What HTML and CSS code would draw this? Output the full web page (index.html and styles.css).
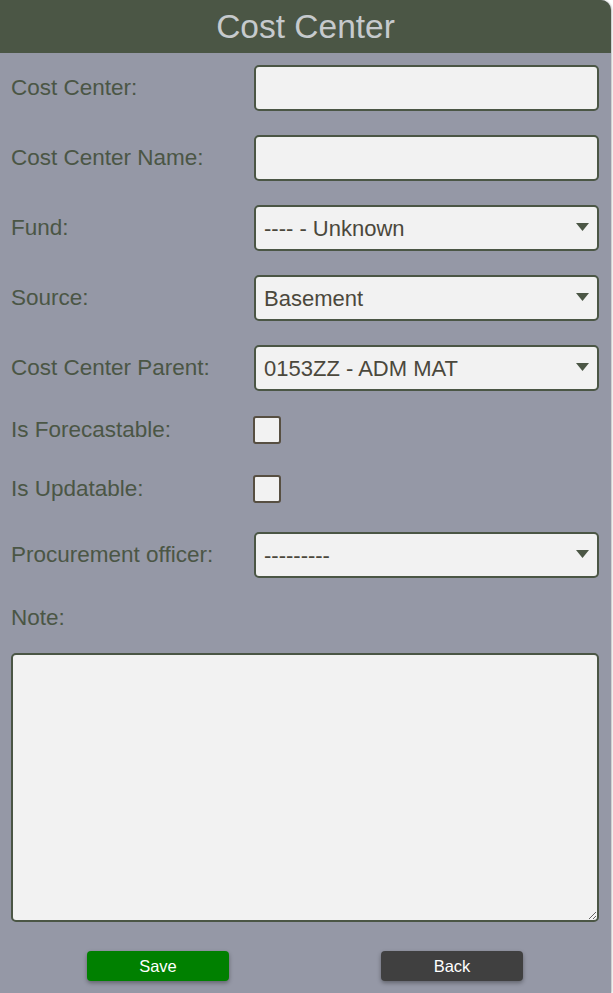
FILE: index.html
```html
<!DOCTYPE html>
<html lang="en">
<head>
<meta charset="utf-8">
<title>Cost Center</title>
<link rel="stylesheet" href="styles.css">
</head>
<body>
<div class="panel">
  <header class="panel-header">Cost Center</header>
  <form class="form">
    <div class="row">
      <label class="label" for="cc">Cost Center:</label>
      <input class="field" id="cc" type="text">
    </div>
    <div class="row">
      <label class="label" for="ccn">Cost Center Name:</label>
      <input class="field" id="ccn" type="text">
    </div>
    <div class="row">
      <label class="label" for="fund">Fund:</label>
      <div class="select-wrap">
        <select class="field select" id="fund"><option>---- - Unknown</option></select>
        <svg class="arrow" width="13" height="8" viewBox="0 0 13 8"><path d="M0 0H13L6.5 8Z" fill="#4b5645"/></svg>
      </div>
    </div>
    <div class="row">
      <label class="label" for="src">Source:</label>
      <div class="select-wrap">
        <select class="field select" id="src"><option>Basement</option></select>
        <svg class="arrow" width="13" height="8" viewBox="0 0 13 8"><path d="M0 0H13L6.5 8Z" fill="#4b5645"/></svg>
      </div>
    </div>
    <div class="row">
      <label class="label" for="par">Cost Center Parent:</label>
      <div class="select-wrap">
        <select class="field select" id="par"><option>0153ZZ - ADM MAT</option></select>
        <svg class="arrow" width="13" height="8" viewBox="0 0 13 8"><path d="M0 0H13L6.5 8Z" fill="#4b5645"/></svg>
      </div>
    </div>
    <div class="row check-row first-check">
      <label class="label" for="fc">Is Forecastable:</label>
      <input class="check" id="fc" type="checkbox">
    </div>
    <div class="row check-row second-check">
      <label class="label" for="up">Is Updatable:</label>
      <input class="check" id="up" type="checkbox">
    </div>
    <div class="row last-row">
      <label class="label" for="po">Procurement officer:</label>
      <div class="select-wrap">
        <select class="field select" id="po"><option>---------</option></select>
        <svg class="arrow" width="13" height="8" viewBox="0 0 13 8"><path d="M0 0H13L6.5 8Z" fill="#4b5645"/></svg>
      </div>
    </div>
    <label class="label note-label" for="note">Note:</label>
    <textarea class="note" id="note"></textarea>
    <div class="actions">
      <div class="action-cell"><button type="button" class="btn btn-save">Save</button></div>
      <div class="action-cell"><button type="button" class="btn btn-back">Back</button></div>
    </div>
  </form>
</div>
</body>
</html>
```

FILE: styles.css
```css
html, body {
  margin: 0;
  padding: 0;
  background: #ffffff;
}

body {
  font-family: "Liberation Sans", Arial, sans-serif;
}

.panel {
  width: 611px;
  min-height: 993px;
  background: #9598a6;
  border-top-right-radius: 10px;
  box-shadow: 1px 0 2px rgba(0, 0, 0, 0.25);
  box-sizing: border-box;
}

.panel-header {
  height: 53px;
  line-height: 53px;
  background: #4b5645;
  color: #c6cacd;
  font-size: 33.5px;
  text-align: center;
  border-top-right-radius: 10px;
}

.form {
  padding: 12px 12px 12px 11px;
  margin: 0;
}

.row {
  display: flex;
  align-items: center;
  height: 46px;
  margin-bottom: 24px;
}

.label {
  width: 243px;
  flex: none;
  font-size: 22.5px;
  color: #4b5645;
  display: block;
}

.field {
  box-sizing: border-box;
  width: 345px;
  height: 46px;
  border: 2px solid #4b5645;
  border-radius: 5px;
  background: #f2f2f2;
  font-family: "Liberation Sans", Arial, sans-serif;
  font-size: 22px;
  color: #4b483c;
  padding: 0 8px;
  margin: 0;
  outline: none;
}

.select-wrap {
  position: relative;
  width: 345px;
  height: 46px;
}

.select {
  appearance: none;
  -webkit-appearance: none;
  padding-left: 8px;
}

.arrow {
  position: absolute;
  right: 10px;
  top: 18px;
  pointer-events: none;
}

.check-row {
  height: 30px;
}

.first-check {
  margin-bottom: 29px;
}

.second-check {
  margin-bottom: 28px;
}

.last-row {
  margin-bottom: 27px;
}

.check {
  appearance: none;
  -webkit-appearance: none;
  box-sizing: border-box;
  width: 28px;
  height: 28px;
  margin: 0 0 0 -1px;
  border: 2px solid #574f42;
  border-radius: 3px;
  background: #f2f2f2;
}

.note-label {
  height: 26px;
  line-height: 26px;
  margin: 0 0 22px 0;
}

.note {
  display: block;
  box-sizing: border-box;
  width: 588px;
  height: 269px;
  border: 2px solid #4b5645;
  border-radius: 5px;
  background: #f2f2f2;
  font-family: "Liberation Sans", Arial, sans-serif;
  font-size: 18px;
  margin: 0;
  outline: none;
}

.actions {
  display: grid;
  grid-template-columns: 1fr 1fr;
  width: 588px;
  margin-top: 29px;
}

.action-cell {
  display: flex;
  justify-content: center;
}

.btn {
  width: 142px;
  height: 30px;
  border: none;
  border-radius: 4px;
  color: #ffffff;
  font-family: "Liberation Sans", Arial, sans-serif;
  font-size: 16.5px;
  box-shadow: 0 2px 4px rgba(0, 0, 0, 0.35);
  padding: 0;
}

.btn-save {
  background: #008000;
}

.btn-back {
  background: #404040;
}
```
